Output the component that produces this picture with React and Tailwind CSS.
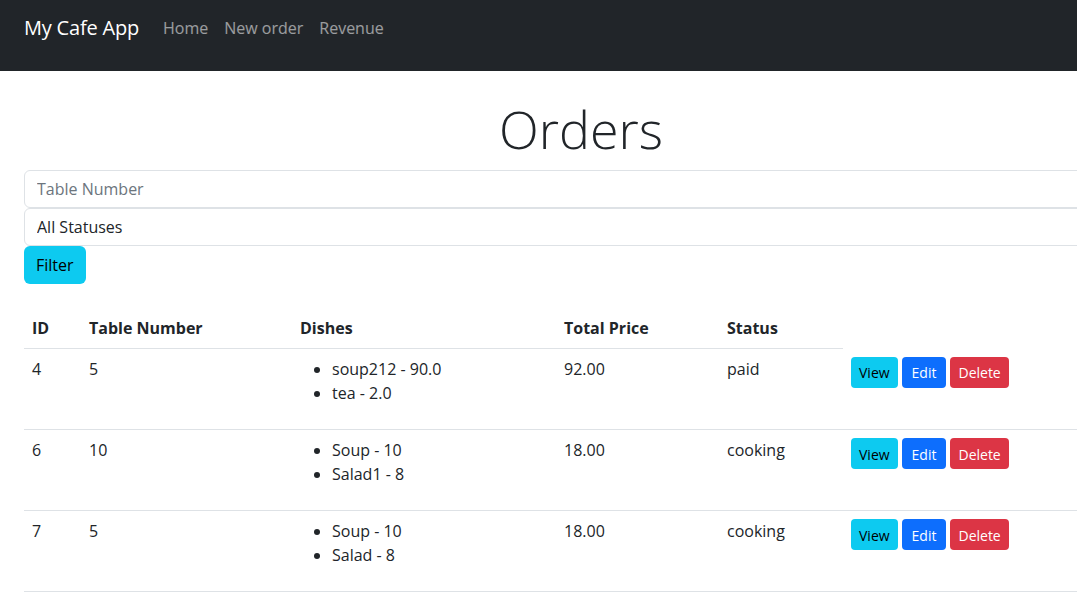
import React from 'react';

const orders = [
  { id: 4, table: 5, dishes: ['soup212 - 90.0', 'tea - 2.0'], total: '92.00', status: 'paid' },
  { id: 6, table: 10, dishes: ['Soup - 10', 'Salad1 - 8'], total: '18.00', status: 'cooking' },
  { id: 7, table: 5, dishes: ['Soup - 10', 'Salad - 8'], total: '18.00', status: 'cooking' },
];

const App = () => {
  return (
    <div className="w-[1077px] min-h-[600px] overflow-hidden bg-white text-[#212529] text-base font-['Open_Sans',sans-serif]">
      <nav className="h-[71px] bg-[#212529] flex items-start pt-2 px-6">
        <a className="text-white text-xl leading-[30px] py-[5px] mr-4 tracking-[-0.2px]">My Cafe App</a>
        <div className="flex">
          <a className="px-2 py-2 leading-6 text-white/55">Home</a>
          <a className="px-2 py-2 leading-6 text-white/55">New order</a>
          <a className="px-2 py-2 leading-6 text-white/55">Revenue</a>
        </div>
      </nav>

      <div className="ml-6 w-[1114px]">
        <h1 className="mt-6 mb-2 text-center text-[52px] leading-[67px] font-light">Orders</h1>

        <form className="mb-6" onSubmit={(e) => e.preventDefault()}>
          <input
            placeholder="Table Number"
            className="block w-full h-[38px] border border-[#dee2e6] rounded-md px-3 leading-6 placeholder:text-[#6c757d] focus:outline-none"
          />
          <select className="block w-full h-[38px] border border-[#dee2e6] rounded-md px-3 leading-6 appearance-none bg-white">
            <option>All Statuses</option>
          </select>
          <button type="submit" className="h-[38px] px-3 bg-[#0dcaf0] text-black rounded-md leading-6">
            Filter
          </button>
        </form>

        <table className="w-full table-fixed border-collapse">
          <colgroup>
            <col className="w-[57px]" />
            <col className="w-[211px]" />
            <col className="w-[264px]" />
            <col className="w-[163px]" />
            <col className="w-[124px]" />
            <col />
          </colgroup>
          <thead>
            <tr className="text-left">
              <th className="p-2 leading-6 font-bold border-b border-[#dee2e6]">ID</th>
              <th className="p-2 leading-6 font-bold border-b border-[#dee2e6]">Table Number</th>
              <th className="p-2 leading-6 font-bold border-b border-[#dee2e6]">Dishes</th>
              <th className="p-2 leading-6 font-bold border-b border-[#dee2e6]">Total Price</th>
              <th className="p-2 leading-6 font-bold border-b border-[#dee2e6]">Status</th>
            </tr>
          </thead>
          <tbody>
            {orders.map(o => (
              <tr key={o.id} className="align-top">
                <td className="p-2 leading-6 border-b border-[#dee2e6]">{o.id}</td>
                <td className="p-2 leading-6 border-b border-[#dee2e6]">{o.table}</td>
                <td className="p-2 leading-6 border-b border-[#dee2e6]">
                  <ul className="list-disc pl-8 mb-4">
                    {o.dishes.map(d => <li key={d}>{d}</li>)}
                  </ul>
                </td>
                <td className="p-2 leading-6 border-b border-[#dee2e6]">{o.total}</td>
                <td className="p-2 leading-6 border-b border-[#dee2e6]">{o.status}</td>
                <td className="p-2 leading-6 border-b border-[#dee2e6]">
                  <div className="flex gap-1">
                    <button className="h-[31px] px-2 pt-[2px] text-sm bg-[#0dcaf0] text-black rounded">View</button>
                    <button className="h-[31px] px-[10px] pt-[2px] text-sm bg-[#0d6efd] text-white rounded">Edit</button>
                    <button className="h-[31px] px-2 pt-[2px] text-sm bg-[#dc3545] text-white rounded">Delete</button>
                  </div>
                </td>
              </tr>
            ))}
          </tbody>
        </table>
      </div>
    </div>
  );
};

export default App;
